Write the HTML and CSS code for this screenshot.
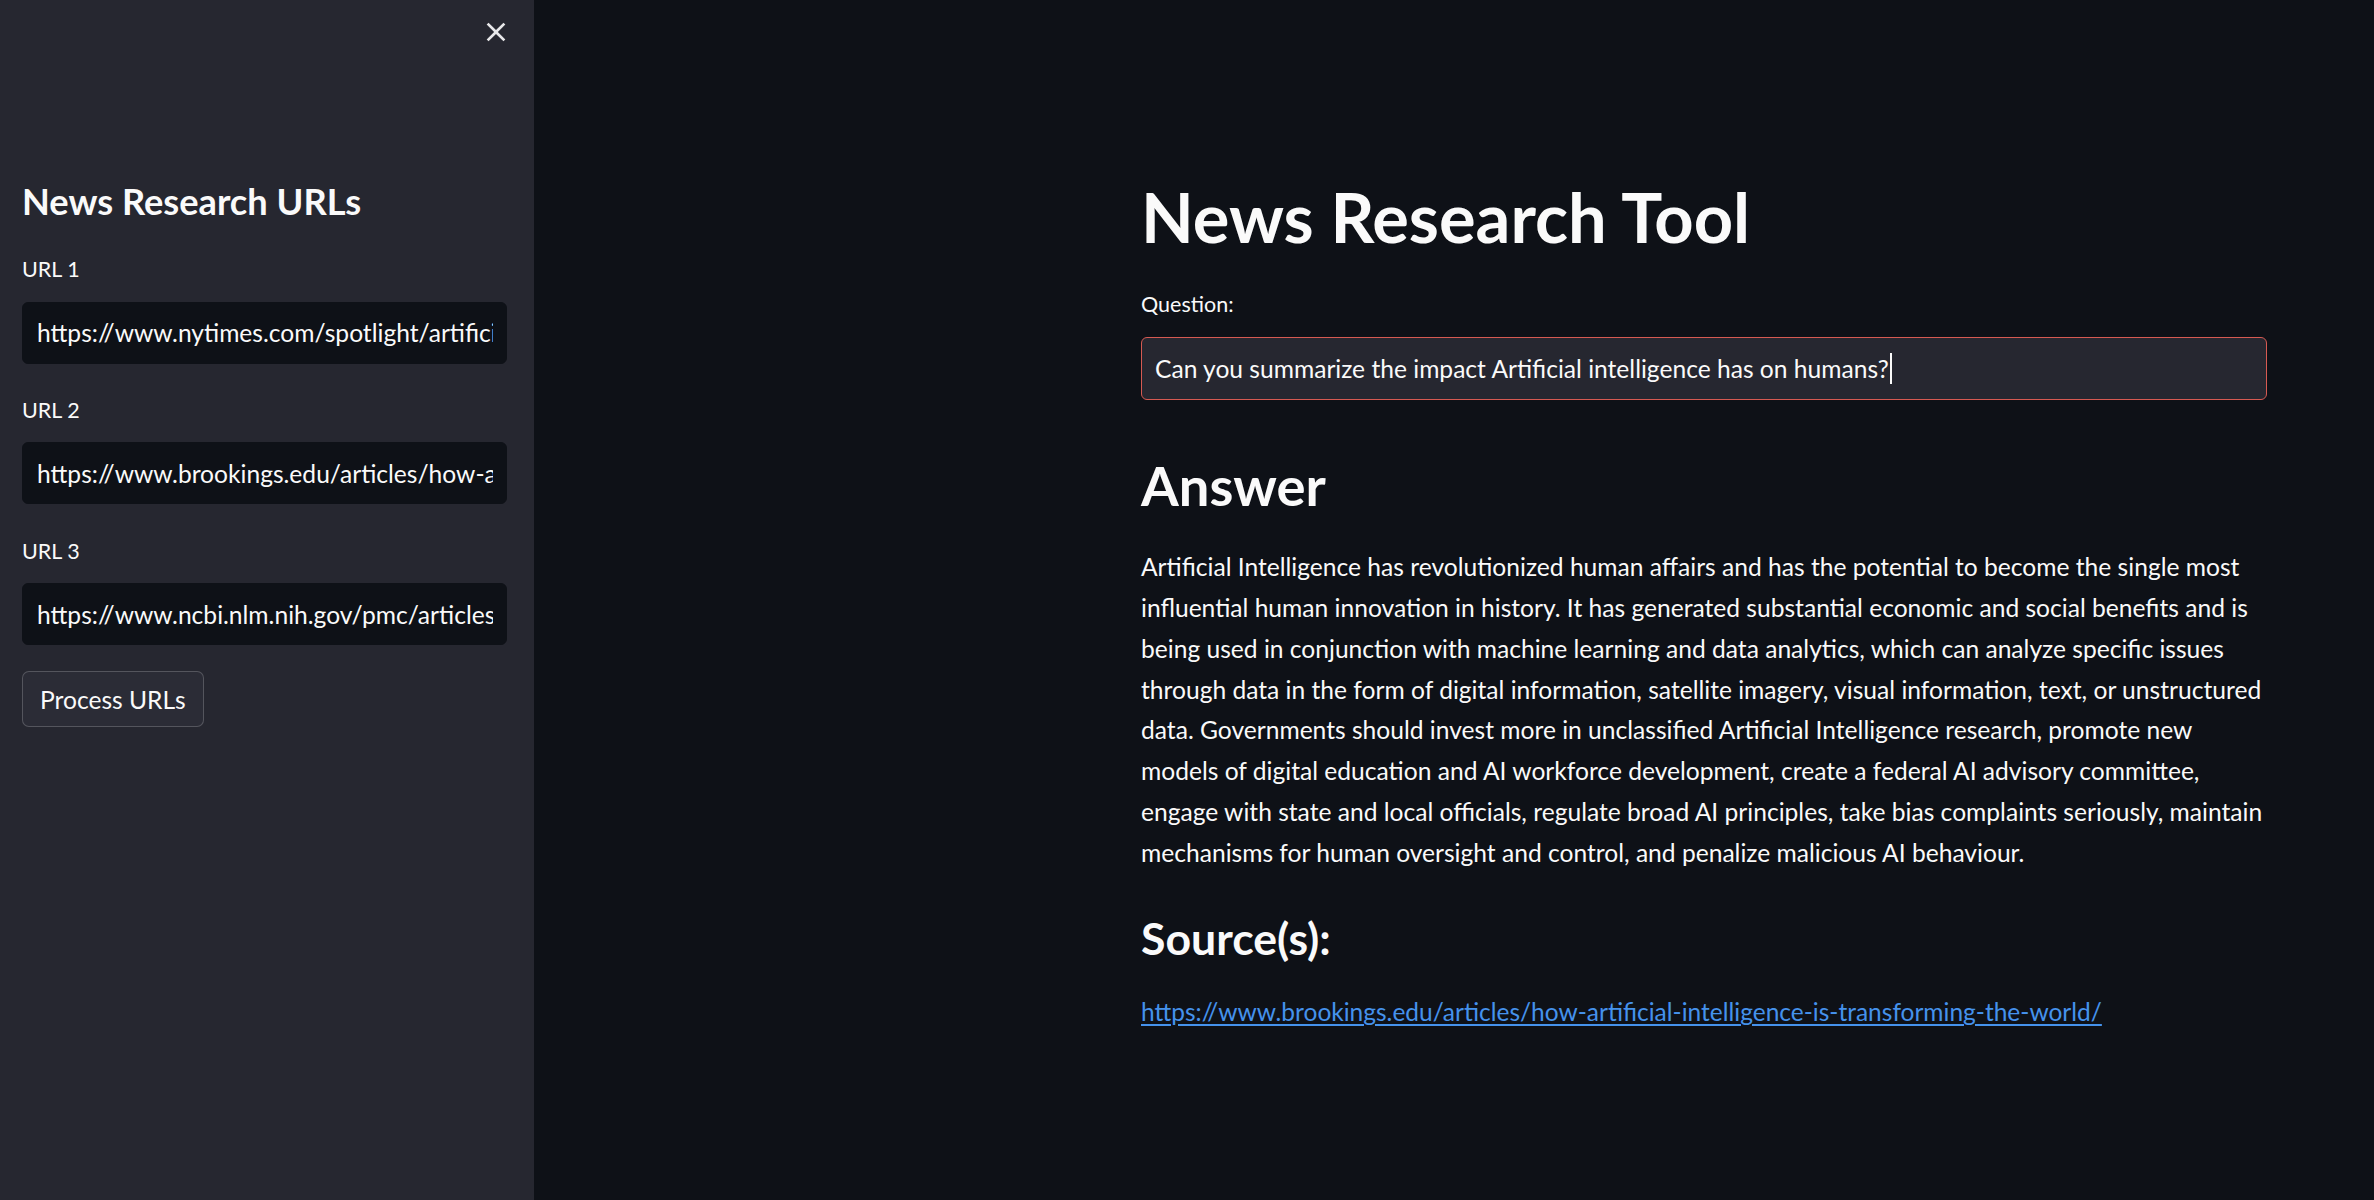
FILE: index.html
```html
<!DOCTYPE html>
<html lang="en">
<head>
<meta charset="utf-8">
<title>News Research Tool</title>
<link rel="stylesheet" href="styles.css">
</head>
<body>
<div class="app">
  <aside class="sidebar">
    <div class="sidebar-header">
      <button class="close-btn" aria-label="Close sidebar">
        <svg viewBox="0 0 24 24" width="32" height="32"><path d="M19 6.41L17.59 5 12 10.59 6.41 5 5 6.41 10.59 12 5 17.59 6.41 19 12 13.41 17.59 19 19 17.59 13.41 12z" fill="currentColor"/></svg>
      </button>
    </div>
    <h2 class="sidebar-title">News Research URLs</h2>
    <div class="field">
      <label class="label" for="u1">URL 1</label>
      <input class="side-input" id="u1" type="text" value="https://www.nytimes.com/spotlight/artificial-intelligence">
    </div>
    <div class="field">
      <label class="label" for="u2">URL 2</label>
      <input class="side-input" id="u2" type="text" value="https://www.brookings.edu/articles/how-artificial-intelligence-is-transforming-the-world/">
    </div>
    <div class="field">
      <label class="label" for="u3">URL 3</label>
      <input class="side-input" id="u3" type="text" value="https://www.ncbi.nlm.nih.gov/pmc/articles/PMC7605294/">
    </div>
    <button class="process-btn">Process URLs</button>
  </aside>
  <main class="main">
    <div class="content">
      <h1 class="title">News Research Tool</h1>
      <div class="label q-label">Question:</div>
      <div class="question-box" role="textbox">Can you summarize the impact Artificial intelligence has on humans?<span class="caret"></span></div>
      <h2 class="answer-title">Answer</h2>
      <p class="answer">Artificial Intelligence has revolutionized human affairs and has the potential to become the single most influential human innovation in history. It has generated substantial economic and social benefits and is being used in conjunction with machine learning and data analytics, which can analyze specific issues through data in the form of digital information, satellite imagery, visual information, text, or unstructured data. Governments should invest more in unclassified Artificial Intelligence research, promote new models of digital education and AI workforce development, create a federal AI advisory committee, engage with state and local officials, regulate broad AI principles, take bias complaints seriously, maintain mechanisms for human oversight and control, and penalize malicious AI behaviour.</p>
      <h3 class="sources-title">Source(s):</h3>
      <p class="source"><a class="source-link" href="https://www.brookings.edu/articles/how-artificial-intelligence-is-transforming-the-world/">https://www.brookings.edu/articles/how-artificial-intelligence-is-transforming-the-world/</a></p>
    </div>
  </main>
</div>
</body>
</html>
```
FILE: styles.css
```css
* { box-sizing: border-box; }

html, body {
  margin: 0;
  padding: 0;
  height: 100%;
}

body {
  background: #0e1117;
  color: #fafafa;
  font-family: "Lato", "Noto Sans", sans-serif;
  overflow: hidden;
}

.app {
  display: flex;
  height: 100vh;
}

/* Sidebar */
.sidebar {
  width: 534px;
  flex: 0 0 534px;
  background: #262730;
  padding: 0 27px 0 22px;
  display: flex;
  flex-direction: column;
  align-items: flex-start;
}

.sidebar-header {
  height: 64px;
  align-self: stretch;
  display: flex;
  align-items: center;
  justify-content: flex-end;
  margin-right: -5px;
}

.close-btn {
  width: 32px;
  height: 32px;
  padding: 0;
  border: 0;
  background: transparent;
  color: #e8e8ea;
  display: flex;
  align-items: center;
  justify-content: center;
}

.sidebar-title {
  margin: 115px 0 0;
  font-size: 36.2px;
  line-height: 44.4px;
  font-weight: 700;
}

.label {
  display: block;
  font-size: 21.5px;
  line-height: 30px;
  font-weight: 400;
}

.field {
  width: 100%;
  display: flex;
  flex-direction: column;
}

.sidebar-title + .field { margin-top: 30.8px; }
.field + .field { margin-top: 31.7px; }

.field .label { margin-bottom: 17.3px; }

.side-input {
  width: 100%;
  height: 62px;
  background: #0e1117;
  color: #fafafa;
  border: 1px solid #0e1117;
  border-radius: 6px;
  padding: 0 13px 0 14px;
  font-family: "Lato", "Noto Sans", sans-serif;
  font-size: 24.6px;
  outline: none;
}

.process-btn {
  margin-top: 26px;
  height: 56px;
  padding: 0 17px;
  background: #2b2c36;
  color: #fafafa;
  border: 1px solid rgba(250, 250, 250, 0.2);
  border-radius: 7px;
  font-family: "Lato", "Noto Sans", sans-serif;
  font-size: 24.6px;
}

/* Main */
.main {
  flex: 1;
  padding-left: 607px;
}

.content {
  width: 1126px;
  padding-top: 175.6px;
}

.title {
  margin: 0;
  font-size: 68.6px;
  line-height: 81.1px;
  font-weight: 700;
}

.q-label {
  margin-top: 32.7px;
}

.question-box {
  margin-top: 17.9px;
  height: 63px;
  background: #262730;
  border: 1px solid #d65a52;
  border-radius: 6px;
  padding: 0 13px;
  display: flex;
  align-items: center;
  font-size: 24.6px;
  white-space: nowrap;
  overflow: hidden;
}

.caret {
  display: inline-block;
  width: 2px;
  height: 31px;
  background: #fafafa;
  margin-left: 1px;
}

.answer-title {
  margin: 52.2px 0 0;
  font-size: 54.4px;
  line-height: 66.4px;
  font-weight: 700;
}

.answer {
  margin: 27.8px 0 0;
  font-size: 24.6px;
  line-height: 40.96px;
}

.sources-title {
  margin: 37.6px 0 0;
  font-size: 44.6px;
  line-height: 51.6px;
  font-weight: 700;
}

.source {
  margin: 29px 0 0;
  font-size: 24.5px;
  line-height: 40.96px;
}

.source-link {
  color: #4592ec;
  text-decoration: underline;
  text-underline-offset: 3px;
}
```
